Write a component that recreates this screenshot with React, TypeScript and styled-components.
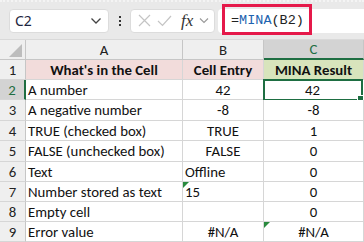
import React from 'react';
import styled, { createGlobalStyle, css } from 'styled-components';

const GREEN = '#1e6e42';
const GRID = '#d6d6d6';

const GlobalStyle = createGlobalStyle`
  html, body {
    margin: 0;
    padding: 0;
    background: #ffffff;
  }
  body {
    font-family: Carlito, Lato, "Liberation Sans", sans-serif;
    width: 364px;
    height: 242px;
    overflow: hidden;
  }
`;

const Toolbar = styled.div`
  height: 40px;
  display: flex;
  align-items: center;
  padding-left: 9px;
  background: #e9e9e9;
  border-bottom: 1px solid #d9d9d9;
  box-sizing: border-box;
  border-top: 2px dotted #f4f4f4;
`;

const NameBox = styled.div`
  width: 100px;
  height: 24px;
  box-sizing: border-box;
  background: #fff;
  border: 1px solid #dcdcdc;
  border-radius: 4px;
  display: flex;
  align-items: center;
  justify-content: space-between;
  padding: 0 6px 0 5px;
  font-family: "Noto Sans", sans-serif;
  font-size: 14px;
  color: #1c2440;
`;

const Dots = styled.div`
  width: 21px;
  display: flex;
  flex-direction: column;
  align-items: center;
  gap: 2px;
  & > span {
    width: 2px;
    height: 2px;
    background: #333;
  }
`;

const FxBox = styled.div`
  width: 85px;
  height: 24px;
  box-sizing: border-box;
  background: #fff;
  border: 1px solid #dcdcdc;
  border-radius: 4px;
  display: flex;
  align-items: center;
  padding-left: 7px;
  gap: 6px;
`;

const Fx = styled.span`
  font-family: "Liberation Serif", serif;
  font-style: italic;
  font-size: 17px;
  color: #333;
  margin-left: 3px;
`;

const FormulaInput = styled.div`
  position: relative;
  margin-left: 3px;
  flex: 1;
  height: 24px;
  background: #fff;
  border-radius: 4px 0 0 4px;
  display: flex;
  align-items: center;
  padding-left: 13px;
  font-family: "Liberation Mono", monospace;
  font-size: 13.5px;
  color: #222;
`;

const Highlight = styled.div`
  position: absolute;
  left: 4px;
  top: -5px;
  width: 90px;
  height: 31px;
  box-sizing: border-box;
  border: 3px solid #e5194a;
`;

const Fn = styled.span`
  color: #1d63b0;
`;

const Sheet = styled.div`
  display: grid;
  grid-template-columns: 26px 157px 81px 100px;
  grid-template-rows: 20px 20px 20px 21px 20px 21px 20px 20px 20px 20px;
  font-size: 14.8px;
  color: #111;
`;

const ColHead = styled.div<{ $active?: boolean }>`
  position: relative;
  background: #efefef;
  border-right: 1px solid #c6c6c6;
  border-bottom: 1px solid #c6c6c6;
  display: flex;
  align-items: center;
  justify-content: center;
  color: #222;
  ${p =>
    p.$active &&
    css`
      background: #d3d3d3;
      color: ${GREEN};
      border-bottom: 2px solid ${GREEN};
    `}
`;

const Corner = styled(ColHead)`
  justify-content: flex-end;
  align-items: flex-end;
  padding: 0 3px 2px 0;
`;

const RowHead = styled.div<{ $active?: boolean }>`
  background: #efefef;
  border-right: 1px solid #c6c6c6;
  border-bottom: 1px solid ${GRID};
  display: flex;
  align-items: center;
  justify-content: center;
  color: #222;
  ${p =>
    p.$active &&
    css`
      background: #d3d3d3;
      color: ${GREEN};
      border-right: 2px solid ${GREEN};
    `}
`;

const Cell = styled.div<{
  $align?: 'left' | 'center';
  $bg?: string;
  $bold?: boolean;
  $selected?: boolean;
  $flag?: boolean;
}>`
  position: relative;
  box-sizing: border-box;
  border-right: 1px solid ${GRID};
  border-bottom: 1px solid ${GRID};
  background: ${p => p.$bg || '#fff'};
  font-weight: ${p => (p.$bold ? 700 : 400)};
  display: flex;
  align-items: center;
  justify-content: ${p => (p.$align === 'left' ? 'flex-start' : 'center')};
  padding-left: ${p => (p.$align === 'left' ? '2px' : '0')};
  white-space: nowrap;
  overflow: visible;
  ${p =>
    p.$flag &&
    css`
      &::before {
        content: '';
        position: absolute;
        top: 0;
        left: 0;
        border-top: 6px solid #2a8a3e;
        border-right: 6px solid transparent;
      }
    `}
  ${p =>
    p.$selected &&
    css`
      outline: 2px solid ${GREEN};
      outline-offset: -1px;
      margin-right: 2px;
      &::after {
        content: '';
        position: absolute;
        right: -3px;
        bottom: -3px;
        width: 5px;
        height: 5px;
        background: ${GREEN};
        border: 1px solid #fff;
      }
    `}
`;

type Row = {
  a: string;
  b: string;
  bAlign?: 'left' | 'center';
  bFlag?: boolean;
  c: string;
  cFlag?: boolean;
};

const rows: Row[] = [
  { a: 'A number', b: '42', c: '42' },
  { a: 'A negative number', b: '-8', c: '-8' },
  { a: 'TRUE (checked box)', b: 'TRUE', c: '1' },
  { a: 'FALSE (unchecked box)', b: 'FALSE', c: '0' },
  { a: 'Text', b: 'Offline', bAlign: 'left', c: '0' },
  { a: 'Number stored as text', b: '15', bAlign: 'left', bFlag: true, c: '0' },
  { a: 'Empty cell', b: '', c: '0' },
  { a: 'Error value', b: '#N/A', c: '#N/A', cFlag: true },
];

const Chevron = () => (
  <svg width="12" height="8" viewBox="0 0 12 8">
    <path d="M1.5 1.5 L6 6 L10.5 1.5" fill="none" stroke="#444" strokeWidth="1.3" />
  </svg>
);

export default function App() {
  return (
    <>
      <GlobalStyle />
      <Toolbar>
        <NameBox>
          <span>C2</span>
          <Chevron />
        </NameBox>
        <Dots>
          <span />
          <span />
          <span />
        </Dots>
        <FxBox>
          <svg width="13" height="13" viewBox="0 0 13 13">
            <path d="M1 1 L12 12 M12 1 L1 12" stroke="#c4c4c4" strokeWidth="1.2" />
          </svg>
          <svg width="15" height="12" viewBox="0 0 15 12">
            <path d="M1 6 L5.5 10.5 L14 1" fill="none" stroke="#c4c4c4" strokeWidth="1.2" />
          </svg>
          <Fx>fx</Fx>
          <svg width="10" height="7" viewBox="0 0 10 7">
            <path d="M1 1.5 L5 5.5 L9 1.5" fill="none" stroke="#999" strokeWidth="1.1" />
          </svg>
        </FxBox>
        <FormulaInput>
          <Highlight />
          <span>
            =<Fn>MINA</Fn>(B2)
          </span>
        </FormulaInput>
      </Toolbar>
      <Sheet>
        <Corner>
          <svg width="13" height="13" viewBox="0 0 13 13">
            <polygon points="13,0 13,13 0,13" fill="#bdbdbd" />
          </svg>
        </Corner>
        <ColHead>A</ColHead>
        <ColHead>B</ColHead>
        <ColHead $active>C</ColHead>

        <RowHead>1</RowHead>
        <Cell $bg="#f2dcdb" $bold>What's in the Cell</Cell>
        <Cell $bg="#f2dcdb" $bold>Cell Entry</Cell>
        <Cell $bg="#d8e4bc" $bold>MINA Result</Cell>

        {rows.map((r, i) => (
          <React.Fragment key={i}>
            <RowHead $active={i === 0}>{i + 2}</RowHead>
            <Cell $align="left">{r.a}</Cell>
            <Cell $align={r.bAlign} $flag={r.bFlag}>
              {r.b}
            </Cell>
            <Cell $selected={i === 0} $flag={r.cFlag}>
              {r.c}
            </Cell>
          </React.Fragment>
        ))}
      </Sheet>
    </>
  );
}
